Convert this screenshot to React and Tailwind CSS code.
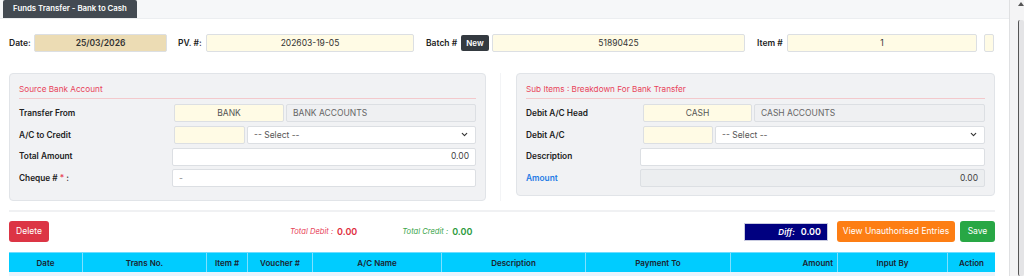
import { ChevronDown } from "lucide-react";

const inputBase = "h-[18px] border border-[#dcdfe3] rounded-[2px] flex items-center text-[8.5px] text-[#333]";

function Field({ className = "", children }) {
    return <div className={`${inputBase} ${className}`}>{children}</div>;
}

function Select({ className = "" }) {
    return (
        <div className={`${inputBase} bg-white justify-between px-[6px] text-[#555] ${className}`}>
            <span>-- Select --</span>
            <ChevronDown size={9} strokeWidth={3} className="text-[#333]" />
        </div>
    );
}

function Row({ label, labelClass = "text-[#222]", labelW, children }) {
    return (
        <div className="flex items-center h-[18px]">
            <div className={`font-semibold text-[8.3px] ${labelClass}`} style={{ width: labelW }}>
                {label}
            </div>
            <div className="flex flex-1 gap-[2px]">{children}</div>
        </div>
    );
}

function Panel({ title, children, className = "" }) {
    return (
        <div className={`bg-[#f1f2f4] border border-[#e1e4e8] rounded-[4px] px-[9px] pt-[9px] ${className}`}>
            <div className="text-[8.2px] text-[#e8435a] pb-[3px] border-b border-[#f3c9cc]">{title}</div>
            <div className="flex flex-col gap-[3.7px] mt-[5px]">{children}</div>
        </div>
    );
}

export default function App() {
    const cols = [
        ["Date", "w-[73px]", "text-center"],
        ["Trans No.", "w-[124px]", "text-center"],
        ["Item #", "w-[41px]", "text-center"],
        ["Voucher #", "w-[65px]", "text-center"],
        ["A/C Name", "w-[129px]", "text-center"],
        ["Description", "w-[144px]", "text-center"],
        ["Payment To", "w-[145px]", "text-center"],
        ["Amount", "w-[107px]", "text-right pr-[4px]"],
        ["Input By", "w-[110px]", "text-center"],
        ["Action", "flex-1", "text-center"],
    ];

    return (
        <div className="flex w-[1024px] h-[276px] overflow-hidden bg-white" style={{ fontFamily: "Inter, 'Liberation Sans', sans-serif" }}>
            <div className="w-[1009px] flex flex-col">
                {/* tab bar */}
                <div className="h-[20px] bg-[#f6f7f9] border-b border-[#eceef1] flex items-end pl-[3px]">
                    <div className="h-[18px] w-[134px] bg-[#434a52] rounded-t-[2px] text-white text-[7.8px] font-semibold flex items-center justify-center">
                        Funds Transfer - Bank to Cash
                    </div>
                </div>

                <div className="pl-[9px] pr-[14px]">
                    {/* top row */}
                    <div className="flex items-center mt-[15px] h-[18px] text-[8.5px] font-semibold text-[#222]">
                        <span className="w-[25px]">Date:</span>
                        <Field className="w-[133px] bg-[#ecdcb4] justify-center">25/03/2026</Field>
                        <span className="ml-[11px] w-[28px]">PV. #:</span>
                        <Field className="w-[208px] bg-[#fffbe5] justify-center font-normal">202603-19-05</Field>
                        <span className="ml-[12px] w-[35px]">Batch #</span>
                        <div className="h-[16px] w-[28px] bg-[#343a40] rounded-[2px] text-white text-[8px] font-semibold flex items-center justify-center">New</div>
                        <Field className="ml-[3px] w-[253px] bg-[#fffbe5] justify-center font-normal">51890425</Field>
                        <span className="ml-[12px] w-[30px]">Item #</span>
                        <Field className="w-[190px] bg-[#fffbe5] justify-center font-normal">1</Field>
                        <Field className="ml-[7px] w-[10px] bg-[#fffbe5]" />
                    </div>

                    {/* panels */}
                    <div className="flex mt-[21px]">
                        <div className="w-[492px] border-r border-[#f3f4f6] pr-[14px]">
                            <Panel title="Source Bank Account" className="h-[128px]">
                                <Row label="Transfer From" labelW={155}>
                                    <Field className="w-[110px] bg-[#fffbe5] justify-center text-[#555]">BANK</Field>
                                    <Field className="flex-1 bg-[#eff0f2] px-[6px] text-[#666]">BANK ACCOUNTS</Field>
                                </Row>
                                <Row label="A/C to Credit" labelW={155}>
                                    <Field className="w-[71px] bg-[#fffbe5]" />
                                    <Select className="flex-1" />
                                </Row>
                                <Row label="Total Amount" labelW={153}>
                                    <Field className="flex-1 bg-white justify-end px-[6px] text-[#444]">0.00</Field>
                                </Row>
                                <Row label={<span>Cheque # <span className="text-[#e8435a]">*</span> :</span>} labelW={153}>
                                    <Field className="flex-1 bg-white px-[6px] text-[#888]">-</Field>
                                </Row>
                            </Panel>
                        </div>
                        <div className="flex-1 pl-[15px]">
                            <Panel title="Sub Items : Breakdown For Bank Transfer" className="h-[123px]">
                                <Row label="Debit A/C Head" labelW={117}>
                                    <Field className="w-[109px] bg-[#fffbe5] justify-center text-[#555]">CASH</Field>
                                    <Field className="flex-1 bg-[#eff0f2] px-[6px] text-[#666]">CASH ACCOUNTS</Field>
                                </Row>
                                <Row label="Debit A/C" labelW={117}>
                                    <Field className="w-[70px] bg-[#fffbe5]" />
                                    <Select className="flex-1" />
                                </Row>
                                <Row label="Description" labelW={114}>
                                    <Field className="flex-1 bg-white" />
                                </Row>
                                <Row label="Amount" labelW={114} labelClass="text-[#1e7be6]">
                                    <Field className="flex-1 bg-[#eceef0] justify-end px-[6px] text-[#444]">0.00</Field>
                                </Row>
                            </Panel>
                        </div>
                    </div>

                    <div className="mt-[9px] h-[2px] bg-[#f0f1f3]" />

                    {/* action row */}
                    <div className="flex items-center mt-[9px] h-[21px] text-[8.5px]">
                        <button className="h-[21px] w-[40px] bg-[#dc3545] rounded-[3px] text-white">Delete</button>
                        <span className="ml-[241px] italic text-[#e8435a] text-[7.6px]">Total Debit :</span>
                        <span className="ml-[4px] font-semibold text-[#e02e3e] text-[9px]">0.00</span>
                        <span className="ml-[45px] italic text-[#3aa54a] text-[7.6px]">Total Credit :</span>
                        <span className="ml-[4px] font-semibold text-[#2b9a3c] text-[9px]">0.00</span>
                        <div className="ml-auto h-[18px] w-[84px] bg-[#000080] border border-[#c9cbe0] flex items-center justify-end pr-[6px] text-white">
                            <span className="italic font-semibold text-[8px]">Diff:</span>
                            <span className="ml-[6px] font-semibold text-[9px]">0.00</span>
                        </div>
                        <button className="ml-[9px] h-[21px] w-[118px] bg-[#fd7e14] rounded-[3px] text-white">View Unauthorised Entries</button>
                        <button className="ml-[5px] h-[21px] w-[35px] bg-[#28a745] rounded-[3px] text-white">Save</button>
                    </div>

                    {/* table header */}
                    <div className="mt-[10px] flex h-[20px] bg-[#00ccff] border-t border-[#6fdcff] text-[8px] font-semibold text-[#1b2430]">
                        {cols.map(([name, w, align], i) => (
                            <div key={name} className={`${w} ${align} flex items-center ${align === "text-center" ? "justify-center" : "justify-end"} ${i > 0 ? "border-l border-[#7fe0ff]" : ""}`}>
                                {name}
                            </div>
                        ))}
                    </div>
                    <div className="h-[10px] bg-[#e8f4fd]" />
                </div>
            </div>

            {/* scrollbar */}
            <div className="w-[15px] bg-[#f4f4f5] border-l border-[#dfe0e2] flex justify-end">
                <div className="flex flex-col items-center w-[7px]">
                    <div className="w-0 h-0 border-l-[3px] border-r-[3px] border-b-[4px] border-l-transparent border-r-transparent border-b-[#555] mt-[2px]" />
                    <div className="mt-[14px] w-[6px] flex-1 bg-[#e4e4e6] border-l border-[#555] rounded-[2px]" />
                </div>
            </div>
        </div>
    );
}
